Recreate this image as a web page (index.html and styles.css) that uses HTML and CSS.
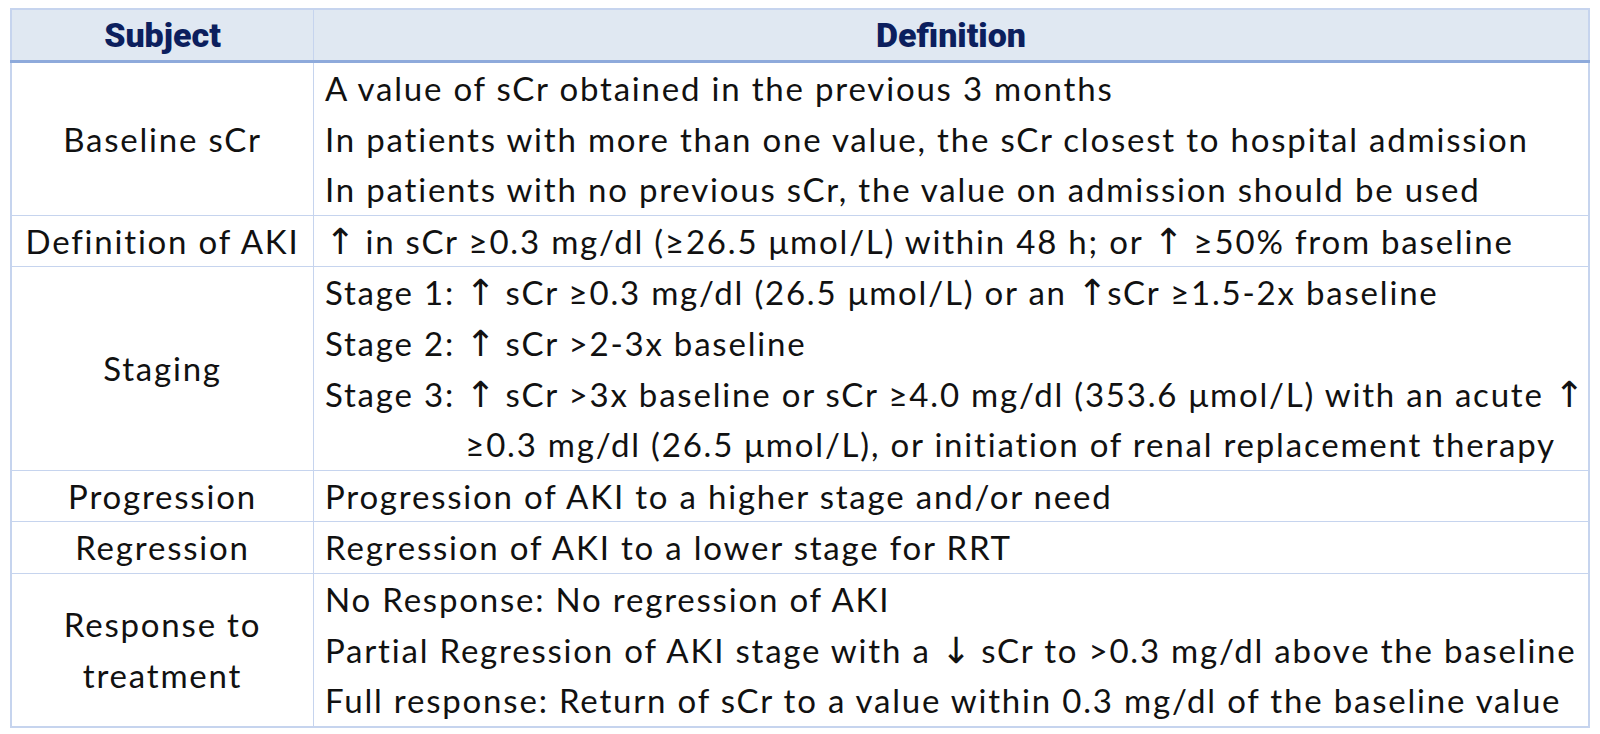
FILE: index.html
```html
<!DOCTYPE html>
<html>
<head>
<meta charset="utf-8">
<link rel="stylesheet" href="styles.css">
</head>
<body>
<table class="defs">
  <thead>
    <tr>
      <th class="col-subject">Subject</th>
      <th class="col-def">Definition</th>
    </tr>
  </thead>
  <tbody>
    <tr>
      <td class="subject">Baseline sCr</td>
      <td class="def">
        <div class="line">A value of sCr obtained in the previous 3 months</div>
        <div class="line">In patients with more than one value, the sCr closest to hospital admission</div>
        <div class="line">In patients with no previous sCr, the value on admission should be used</div>
      </td>
    </tr>
    <tr>
      <td class="subject">Definition of AKI</td>
      <td class="def">
        <div class="line"><span class="arr">↑</span> in sCr ≥0.3 mg/dl (≥26.5 μmol/L) within 48 h; or <span class="arr">↑</span> ≥50% from baseline</div>
      </td>
    </tr>
    <tr>
      <td class="subject">Staging</td>
      <td class="def">
        <div class="line">Stage 1: <span class="arr">↑</span> sCr ≥0.3 mg/dl (26.5 μmol/L) or an <span class="arr">↑</span>sCr ≥1.5-2x baseline</div>
        <div class="line">Stage 2: <span class="arr">↑</span> sCr &gt;2-3x baseline</div>
        <div class="line hang"><span class="lbl">Stage 3: </span><span class="rest"><span class="arr">↑</span> sCr &gt;3x baseline or sCr ≥4.0 mg/dl (353.6 μmol/L) with an acute <span class="arr">↑</span><br>≥0.3 mg/dl (26.5 μmol/L), or initiation of renal replacement therapy</span></div>
      </td>
    </tr>
    <tr>
      <td class="subject">Progression</td>
      <td class="def"><div class="line">Progression of AKI to a higher stage and/or need</div></td>
    </tr>
    <tr>
      <td class="subject">Regression</td>
      <td class="def"><div class="line">Regression of AKI to a lower stage for RRT</div></td>
    </tr>
    <tr>
      <td class="subject">Response to<br>treatment</td>
      <td class="def">
        <div class="line">No Response: No regression of AKI</div>
        <div class="line">Partial Regression of AKI stage with a <span class="arr">↓</span> sCr to &gt;0.3 mg/dl above the baseline</div>
        <div class="line">Full response: Return of sCr to a value within 0.3 mg/dl of the baseline value</div>
      </td>
    </tr>
  </tbody>
</table>
</body>
</html>
```
FILE: styles.css
```css
html, body {
  margin: 0;
  padding: 0;
  background: #ffffff;
}
body {
  padding: 8px 10px 0 10px;
}
.defs {
  width: 1580px;
  table-layout: fixed;
  border-collapse: collapse;
  border: 2px solid #c6d4ee;
  font-family: "Lato", "DejaVu Sans", sans-serif;
  color: #111111;
}
.defs th {
  height: 50px;
  padding: 0;
  background: #e0e8f2;
  border-left: 1px solid #c6d4ee;
  border-right: 1px solid #c6d4ee;
  border-bottom: 3px solid #8eaadb;
  font-family: "Roboto", "Liberation Sans", sans-serif;
  font-weight: 900;
  font-size: 34px;
  color: #0c1f5e;
  text-align: center;
}
.col-subject {
  width: 301px;
}
.defs td {
  border: 1px solid #c6d4ee;
  padding: 0 8px 0 11px;
  vertical-align: middle;
  font-size: 33px;
  letter-spacing: 1.8px;
  line-height: 50.6px;
}
.defs td.subject {
  text-align: center;
  padding: 0 6px;
}
.def {
  text-align: left;
  white-space: nowrap;
}
.line {
  line-height: 50.6px;
}
.hang {
  display: flex;
}
.lbl {
  white-space: pre;
}
.arr {
  font-family: "DejaVu Sans", sans-serif;
  font-size: 36px;
  letter-spacing: 0;
  line-height: 20px;
}
```
